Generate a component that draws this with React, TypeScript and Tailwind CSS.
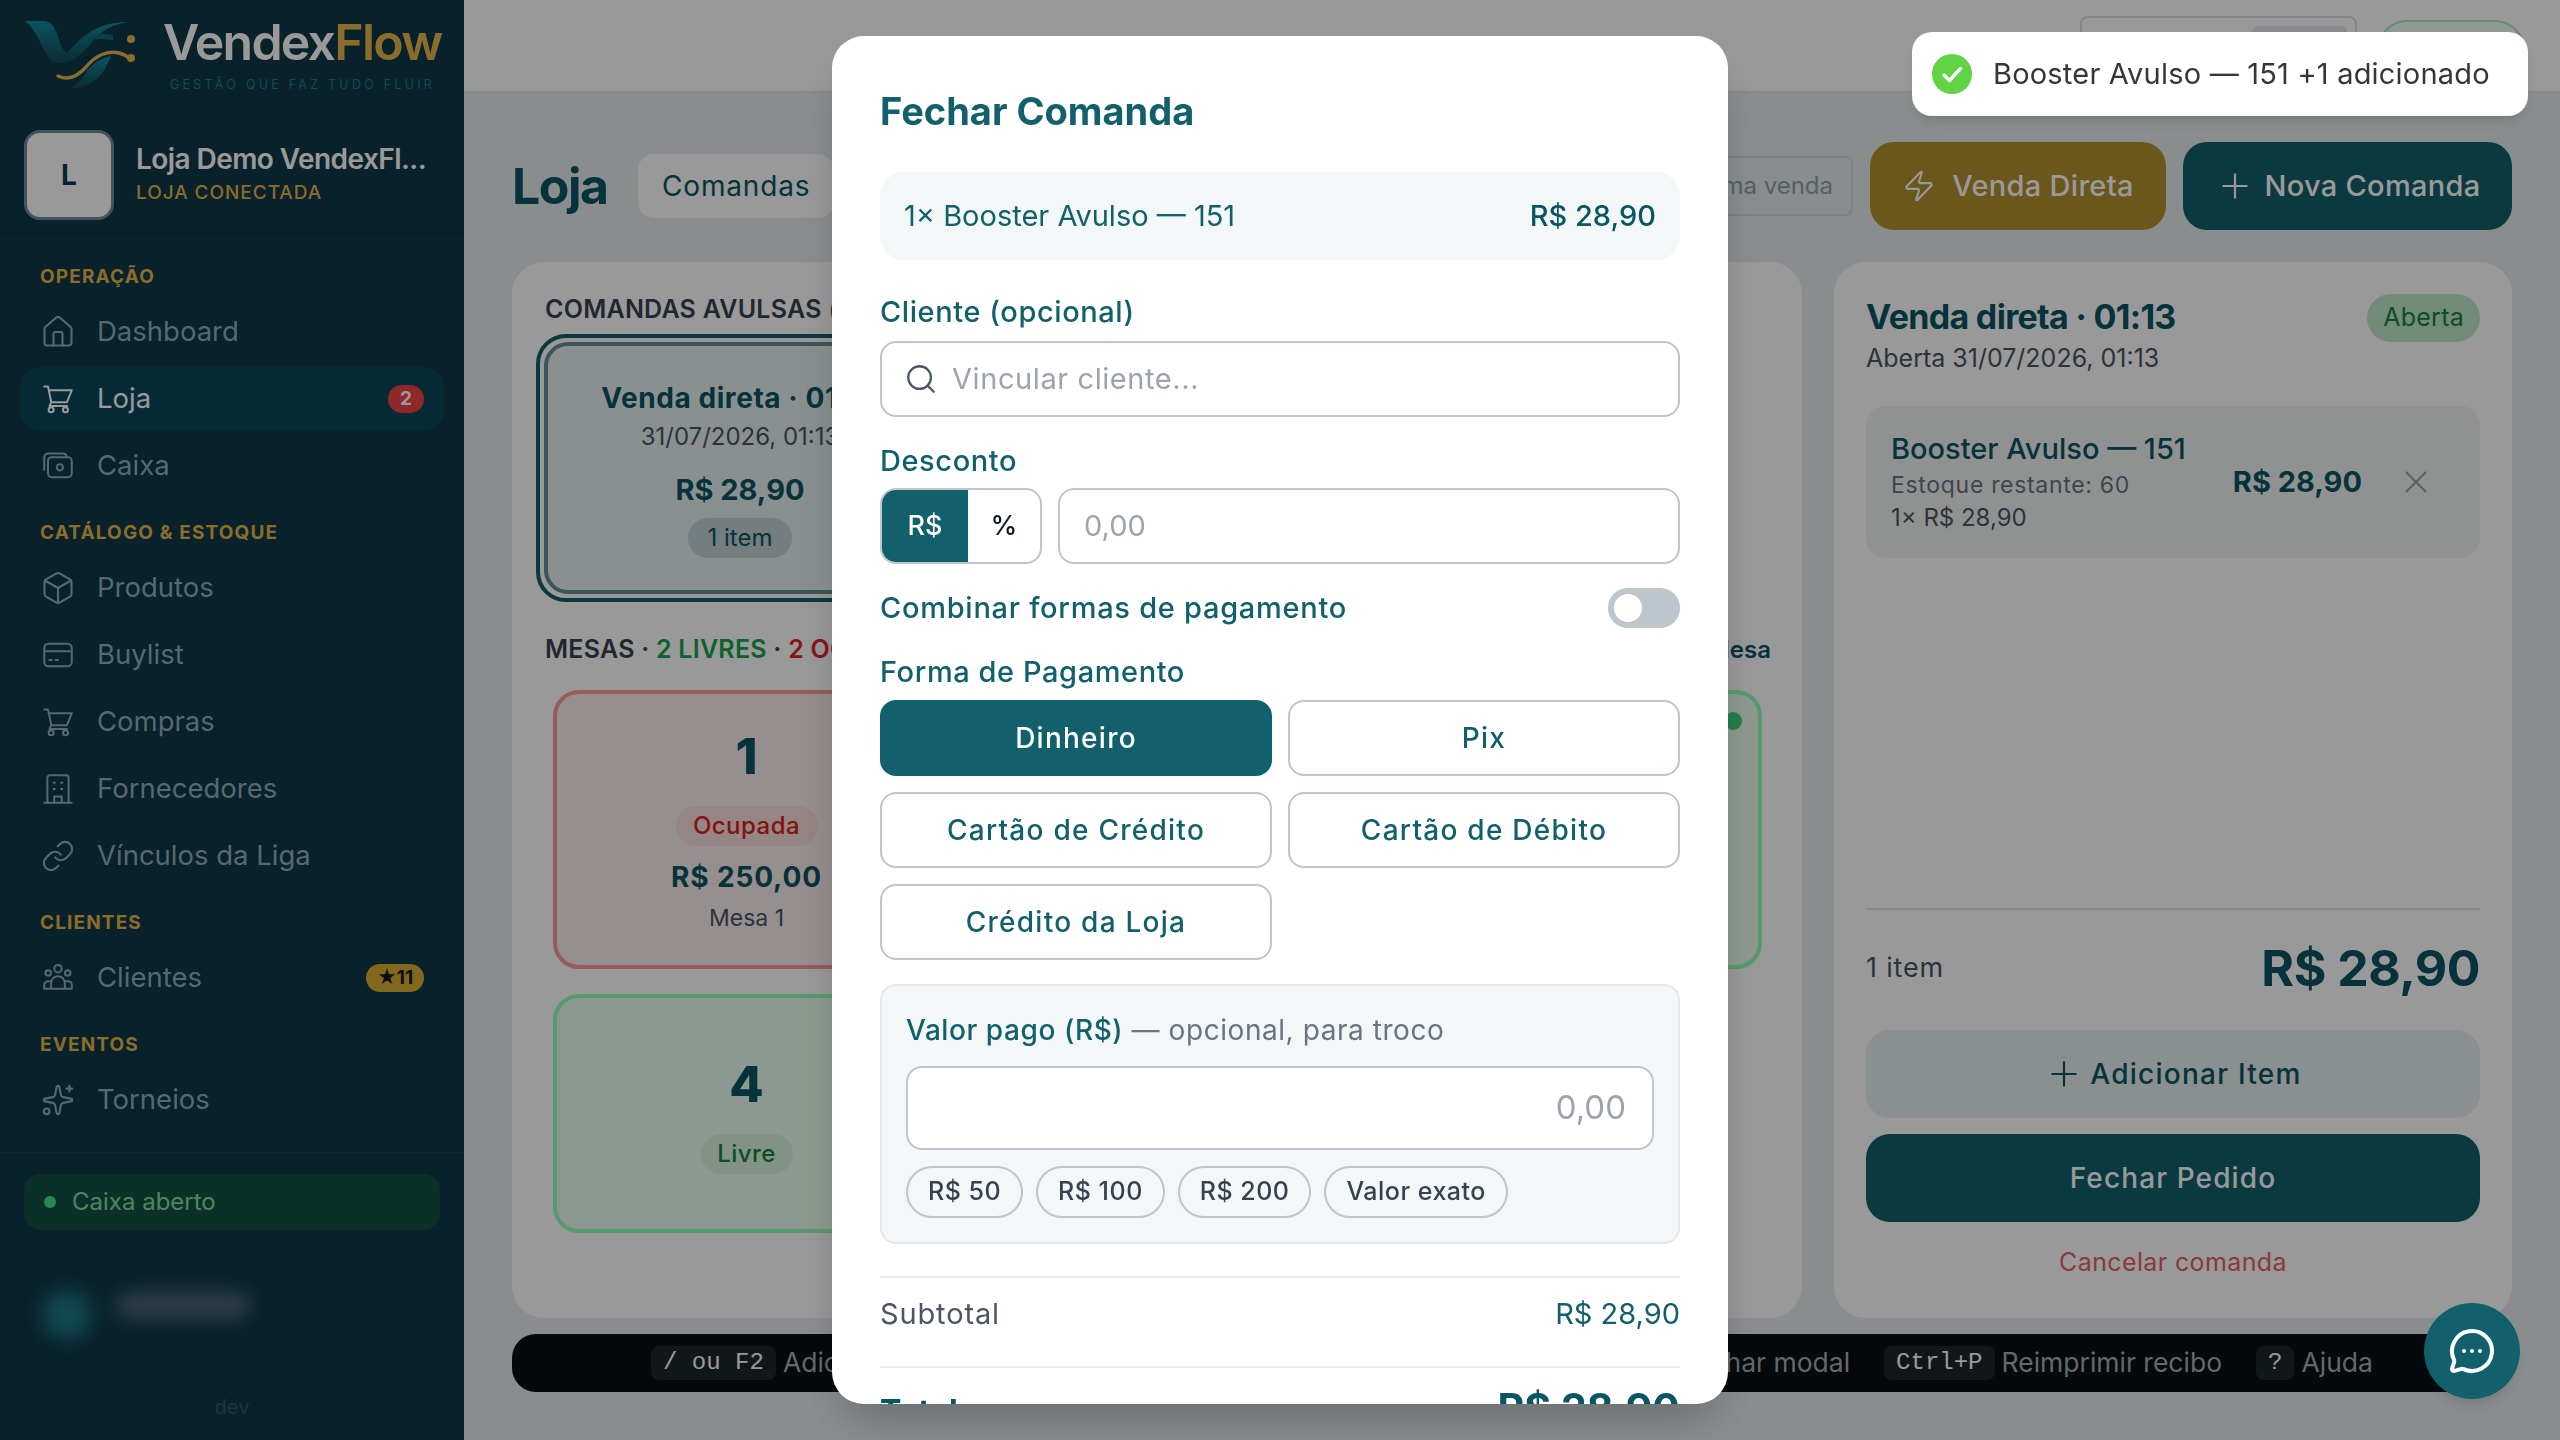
import { Plus, Search, X, Zap, House, Box, Sparkles, Link, MessageCircleMore } from 'lucide-react';
import type { ReactNode } from 'react';

const Cart = () => (
  <svg viewBox="0 0 24 24" className="w-[30px] h-[30px]" fill="none" stroke="currentColor" strokeWidth="1.6" strokeLinecap="round" strokeLinejoin="round">
    <path d="M1 2h3l2.6 12.5h12.6L23 5H5" />
    <path d="M6.6 14.5l-1.4 3h14" />
    <circle cx="6.5" cy="20.5" r="2" />
    <circle cx="18" cy="20.5" r="2" />
  </svg>
);

const CashIcon = () => (
  <svg viewBox="0 0 24 24" className="w-[30px] h-[30px]" fill="none" stroke="currentColor" strokeWidth="1.6" strokeLinecap="round" strokeLinejoin="round">
    <path d="M1 15V5a3 3 0 0 1 3-3h12a3 3 0 0 1 2.8 2" />
    <rect x="4" y="5" width="19" height="16" rx="3" />
    <circle cx="13.5" cy="13" r="2.5" />
  </svg>
);

const CardIcon = () => (
  <svg viewBox="0 0 24 24" className="w-[30px] h-[30px]" fill="none" stroke="currentColor" strokeWidth="1.6" strokeLinecap="round" strokeLinejoin="round">
    <rect x="1" y="3" width="22" height="18" rx="3.5" />
    <path d="M1 9h22M5 16h2M10 16h2" />
  </svg>
);

const BuildingIcon = () => (
  <svg viewBox="0 0 24 24" className="w-[30px] h-[30px]" fill="none" stroke="currentColor" strokeWidth="1.6" strokeLinecap="round" strokeLinejoin="round">
    <path d="M1 23h22M3.5 23V3a2 2 0 0 1 2-2h13a2 2 0 0 1 2 2v20" />
    <path d="M8.5 7h1M14.5 7h1M8.5 12h1M14.5 12h1M9 23v-5h6v5" />
  </svg>
);

const PeopleIcon = () => (
  <svg viewBox="0 0 24 24" className="w-[30px] h-[30px]" fill="none" stroke="currentColor" strokeWidth="1.6" strokeLinecap="round" strokeLinejoin="round">
    <circle cx="12" cy="4.5" r="3" />
    <circle cx="4.2" cy="8" r="2.2" />
    <circle cx="19.8" cy="8" r="2.2" />
    <path d="M6.5 20v-4a5.5 5.5 0 0 1 11 0v4" />
    <path d="M1 20.5v-3a3 3 0 0 1 3-3h2.5M23 20.5v-3a3 3 0 0 0-3-3h-2.5M1 20.5h22" />
  </svg>
);

const Logo = () => (
  <svg viewBox="0 0 116 72" className="w-[116px] h-[72px] shrink-0">
    <defs>
      <linearGradient id="lg1" x1="0" y1="0" x2="0" y2="1">
        <stop offset="0" stopColor="#128ea0" />
        <stop offset="1" stopColor="#114958" />
      </linearGradient>
    </defs>
    <path d="M0 1h18c8 0 11 5 14 13 3 9 5 16 10 19C54 20 68 2 103 2 84 5 72 14 62 28 50 41 38 46 28 42 18 34 14 12 0 1z" fill="url(#lg1)" />
    <path d="M88 15c-8-2-18-1-25 5 8-1 17-1 25 0z" fill="#126a7a" />
    <path d="M86 36c-10 2-20 8-26 18-6 10-14 15-20 14 14 2 30-4 38-16 3-5 6-11 8-16z" fill="url(#lg1)" />
    <path d="M33 56c10 5 20 0 28-9 9-11 21-17 33-14 4 1 8 3 11 6" fill="none" stroke="#e6b648" strokeWidth="3.4" strokeLinecap="round" />
    <circle cx="106" cy="38" r="4" fill="#e6b648" />
    <circle cx="106" cy="19" r="4" fill="#e6b648" />
  </svg>
);

const Section = ({ title }: { title: string }) => (
  <div className="mt-[24px] mb-[12px] pl-[20px] h-[22px] leading-[22px] text-[19px] font-bold tracking-[0.06em] text-[#e6b648]">{title}</div>
);

const NavItem = ({ icon, label, active, badge }: { icon: ReactNode; label: string; active?: boolean; badge?: ReactNode }) => (
  <div className={`flex items-center h-[64px] mb-[3px] pl-[23px] pr-[20px] rounded-[20px] gap-[24px] text-[27.5px] ${active ? 'bg-[#09475a] text-[#ffffff]' : 'text-[#8fb0b8]'}`}>
    <span className="w-[30px] h-[30px] flex items-center justify-center">{icon}</span>
    <span className="flex-1">{label}</span>
    {badge}
  </div>
);

const navIcon = 'shrink-0';

const Sidebar = () => (
  <aside className="w-[464px] h-screen shrink-0 bg-[#0e3746] flex flex-col">
    <div className="h-[110px] shrink-0 flex items-start pl-[25px] pt-[20px] border-b border-[#104150]">
      <Logo />
      <div className="ml-[22px] -mt-[3px]">
        <div className="text-[50px] leading-[50px] font-semibold tracking-[-0.035em] text-white">
          Vendex<span className="text-[#e6b648]">Flow</span>
        </div>
        <div className="mt-[10px] ml-[7px] text-[12.5px] leading-[16px] tracking-[0.26em] whitespace-nowrap text-[#17808f]">GESTÃO QUE FAZ TUDO FLUIR</div>
      </div>
    </div>
    <div className="h-[130px] shrink-0 flex items-center pl-[24px] gap-[22px] border-b border-[#104150]">
      <div className="w-[90px] h-[90px] rounded-[16px] bg-white border-[3px] border-[#6f8e9a] flex items-center justify-center text-[28px] font-bold text-[#0e3746]">L</div>
      <div className="min-w-0 -mt-[3px]">
        <div className="text-[28px] leading-[36px] font-semibold tracking-[-0.02em] text-white">Loja Demo VendexFl...</div>
        <div className="mt-[3px] text-[19px] leading-[26px] font-medium tracking-[0.05em] text-[#e6b648]">LOJA CONECTADA</div>
      </div>
    </div>
    <nav className="flex-1 px-[20px] mt-[2px]">
      <Section title="OPERAÇÃO" />
      <NavItem icon={<House size={36} strokeWidth={1.4} className={navIcon} />} label="Dashboard" />
      <NavItem
        icon={<Cart />}
        label="Loja"
        active
        badge={<span className="w-[36px] h-[28px] rounded-full bg-[#ef4444] flex items-center justify-center text-[19px] font-bold text-white">2</span>}
      />
      <NavItem icon={<CashIcon />} label="Caixa" />
      <Section title="CATÁLOGO & ESTOQUE" />
      <NavItem icon={<Box size={36} strokeWidth={1.4} className={navIcon} />} label="Produtos" />
      <NavItem icon={<CardIcon />} label="Buylist" />
      <NavItem icon={<Cart />} label="Compras" />
      <NavItem icon={<BuildingIcon />} label="Fornecedores" />
      <NavItem icon={<Link size={34} strokeWidth={1.5} className={navIcon} />} label="Vínculos da Liga" />
      <Section title="CLIENTES" />
      <NavItem
        icon={<PeopleIcon />}
        label="Clientes"
        badge={<span className="w-[58px] h-[28px] rounded-full bg-[#d9ae2f] flex items-center justify-center text-[19px] font-bold text-[#10181a]">★11</span>}
      />
      <Section title="EVENTOS" />
      <NavItem icon={<Sparkles size={34} strokeWidth={1.5} className={navIcon} />} label="Torneios" />
    </nav>
    <div className="h-[288px] shrink-0 border-t border-[#12475a] px-[24px] pt-[21px] flex flex-col">
      <div className="h-[56px] rounded-[16px] bg-[#125043] flex items-center pl-[20px] gap-[16px] text-[24px] text-[#7fe0a0]">
        <span className="w-[12px] h-[12px] rounded-full bg-[#4ade80]" />
        Caixa aberto
      </div>
      <div className="mt-[60px] flex items-center gap-[26px] pl-[18px] blur-[10px]">
        <div className="w-[50px] h-[50px] rounded-full bg-[#1f7a8a]" />
        <div className="w-[130px] h-[24px] -mt-[20px] rounded bg-[#56707a]" />
      </div>
      <div className="mt-[52px] text-center text-[20px] text-[#2b5a68]">dev</div>
    </div>
  </aside>
);

const TableCard = ({ n, status, price, free }: { n: string; status: string; price?: string; free?: boolean }) => (
  <div className={`flex flex-col items-center rounded-[26px] border-[4px] ${free ? 'h-[239px] pt-[56px] border-[#92ffbb] bg-[#ecfff0]' : 'h-[279px] pt-[32px] border-[#f99a9a] bg-[#fbeeee]'}`}>
    <div className="text-[50px] leading-[60px] font-extrabold text-[#0a5563]">{n}</div>
    <div className={`mt-[20px] h-[40px] rounded-full flex items-center justify-center text-[24px] font-medium tracking-[0.02em] ${free ? 'w-[92px] bg-[#d9f5e0] text-[#15803d]' : 'w-[142px] bg-[#f8dede] text-[#dc2020]'}`}>{status}</div>
    {price && <div className="mt-[11px] text-[28px] leading-[40px] font-bold tracking-[0.03em] text-[#0a5563]">{price}</div>}
    {price && <div className="mt-[5px] text-[23px] leading-[32px] text-[#4b5563]">Mesa {n}</div>}
  </div>
);

const Kbd = ({ children }: { children: ReactNode }) => (
  <span className="h-[34px] px-[12px] mr-[7px] rounded-[8px] bg-[#1d2529] flex items-center font-['Liberation_Mono',monospace] text-[24px] text-[#ffffff] whitespace-pre">{children}</span>
);

const Hint = ({ k, label }: { k: string; label: string }) => (
  <div className="flex items-center">
    <Kbd>{k}</Kbd>
    <span className="text-[26.5px] text-[#a8aeb0] whitespace-nowrap">{label}</span>
  </div>
);

const LeftPanel = () => (
  <section className="flex-1 min-w-0 h-[1056px] rounded-[32px] bg-white pl-[24px] pr-[40px]">
    <div className="ml-[9px] mt-[33px] h-[28px] leading-[28px] text-[25px] font-semibold tracking-[0.01em] text-[#374151]">COMANDAS AVULSAS <span className="font-normal">(1)</span></div>
    <div className="mt-[11px] w-[408px] h-[268px] rounded-[30px] border-[4px] border-[#11606c] p-[4px]">
      <div className="w-full h-full rounded-[24px] border-[4px] border-[#5f8f99] bg-[#e6f0f0] flex flex-col items-center pt-[33px]">
        <div className="text-[28px] leading-[38px] font-bold tracking-[0.02em] text-[#0a5563] whitespace-nowrap">Venda direta · 01:13</div>
        <div className="mt-[3px] text-[24px] leading-[34px] text-[#4b5563] whitespace-nowrap">31/07/2026, 01:13</div>
        <div className="mt-[17px] text-[29px] leading-[38px] font-bold text-[#0a5563]">R$ 28,90</div>
        <div className="mt-[9px] h-[40px] w-[104px] rounded-full bg-[#c2d1d4] flex items-center justify-center text-[24px] text-[#0a5563]">1 item</div>
      </div>
    </div>
    <div className="mt-[33px] pl-[9px] flex items-center justify-between h-[30px]">
      <div className="text-[25px] font-semibold tracking-[0.01em] text-[#374151]">
        MESAS · <span className="text-[#16a34a]">2 LIVRES</span> · <span className="text-[#dc2626]">2 OCUPADAS</span>
      </div>
      <div className="text-[24px] font-semibold text-[#0a5563] -mr-[9px]">+ Nova Mesa</div>
    </div>
    <div className="mt-[25px] ml-[17px] grid grid-cols-3 gap-x-[24px] gap-y-[25px] items-start">
      <TableCard n="1" status="Ocupada" price="R$ 250,00" />
      <TableCard n="2" status="Ocupada" price="R$ 120,00" />
      <div className="h-[279px] relative flex flex-col items-center pt-[32px] rounded-[26px] border-[4px] border-[#92ffbb] bg-[#ecfff0]">
        <span className="absolute top-[18px] right-[16px] w-[18px] h-[18px] rounded-full bg-[#3ed07a]" />
        <div className="text-[50px] leading-[60px] font-extrabold text-[#0a5563]">3</div>
      </div>
      <TableCard n="4" status="Livre" free />
    </div>
  </section>
);

const RightPanel = () => (
  <section className="w-[678px] shrink-0 h-[1056px] rounded-[32px] bg-white px-[32px] pt-[32px] flex flex-col">
    <div className="flex justify-between items-start">
      <div>
        <div className="text-[34px] leading-[46px] font-bold tracking-[-0.02em] text-[#0a5563]">Venda direta · 01:13</div>
        <div className="text-[25px] leading-[36px] text-[#4b5563]">Aberta 31/07/2026, 01:13</div>
      </div>
      <div className="h-[48px] px-[16px] rounded-full bg-[#bde8c8] flex items-center text-[25px] tracking-[0.01em] text-[#15803d]">Aberta</div>
    </div>
    <div className="mt-[30px] h-[152px] rounded-[20px] bg-[#f1f4f3] pl-[25px] flex items-center">
      <div className="flex-1">
        <div className="text-[29px] leading-[38px] font-medium text-[#0a5563]">Booster Avulso — 151</div>
        <div className="text-[23px] leading-[34px] tracking-[0.03em] text-[#6b7280]">Estoque restante: 60</div>
        <div className="text-[24px] leading-[32px] text-[#4b5563]">1× R$ 28,90</div>
      </div>
      <div className="text-[29px] font-bold text-[#0a5563]">R$ 28,90</div>
      <X size={38} strokeWidth={1.4} className="ml-[35px] mr-[45px] text-[#9ca3af]" />
    </div>
    <div className="flex-1" />
    <div className="h-[118px] border-t-[2px] border-[#e5e7eb] flex items-center justify-between pt-[1px]">
      <span className="text-[27px] tracking-[0.03em] text-[#4b5563]">1 item</span>
      <span className="text-[50px] font-bold tracking-[-0.01em] text-[#0a5563]">R$ 28,90</span>
    </div>
    <div className="mt-[4px] h-[88px] rounded-[24px] bg-[#e6eeee] flex items-center justify-center gap-[6px] text-[28px] font-medium tracking-[0.045em] text-[#0a5563]">
      <Plus size={40} strokeWidth={1.3} />
      Adicionar Item
    </div>
    <div className="mt-[16px] h-[88px] rounded-[24px] bg-[#11606c] flex items-center justify-center text-[28px] font-medium tracking-[0.04em] text-white">Fechar Pedido</div>
    <div className="mt-[22px] mb-[38px] text-center text-[25px] leading-[36px] tracking-[0.015em] text-[#e86060]">Cancelar comanda</div>
  </section>
);

const Main = () => (
  <main className="flex-1 min-w-0 h-screen bg-[#e6ecec] flex flex-col">
    <div className="h-[93px] shrink-0 bg-white border-b-[2px] border-[#e2e8ea] flex items-start justify-end pr-[35px] gap-[20px]">
      <div className="w-[277px] h-[60px] mt-[16px] rounded-[8px] border-[2px] border-[#d7dfe3] flex justify-end p-[8px]">
        <div className="w-[95px] h-[40px] rounded-[6px] bg-[#e5e7eb]" />
      </div>
      <div className="w-[148px] h-[60px] mt-[20px] rounded-full border-[2px] border-[#a7e8bd] bg-[#eefdf3]" />
    </div>
    <div className="flex items-center h-[88px] mt-[49px] ml-[48px] mr-[48px]">
      <h1 className="text-[50px] font-bold tracking-[-0.03em] text-[#0a5563] w-[126px]">Loja</h1>
      <div className="h-[64px] px-[24px] rounded-[16px] bg-white flex items-center text-[28px] tracking-[0.03em] text-[#0a5563]">Comandas</div>
      <div className="flex-1" />
      <div className="w-[300px] h-[60px] rounded-[8px] border-[2px] border-[#cfd9dd] flex items-center justify-end pr-[18px] text-[24px] text-[#8aa0a8] mr-[17px] whitespace-nowrap">Buscar uma venda</div>
      <div className="w-[296px] h-[88px] rounded-[24px] bg-[#b28f30] flex items-center justify-center gap-[16px] text-[29px] font-medium tracking-[0.01em] text-white mr-[17px]">
        <Zap size={34} strokeWidth={1.5} />
        Venda Direta
      </div>
      <div className="w-[329px] h-[88px] rounded-[24px] bg-[#11606c] flex items-center justify-center gap-[10px] text-[29px] font-medium tracking-[0.01em] text-white">
        <Plus size={40} strokeWidth={1.3} />
        Nova Comanda
      </div>
    </div>
    <div className="flex gap-[32px] mx-[48px] mt-[32px]">
      <LeftPanel />
      <RightPanel />
    </div>
    <div className="mx-[48px] mt-[16px] h-[58px] rounded-[24px] bg-[#0a1014] flex items-center justify-center gap-[34px]">
      <Hint k="/ ou F2" label="Adicionar item" />
      <Hint k="F3" label="Buscar no catálogo" />
      <Hint k="F4" label="Fechar pedido" />
      <Hint k="Esc" label="Fechar modal" />
      <Hint k="Ctrl+P" label="Reimprimir recibo" />
      <Hint k="?" label="Ajuda" />
    </div>
  </main>
);

const PayButton = ({ label, active }: { label: string; active?: boolean }) => (
  <div className={`h-[76px] rounded-[16px] flex items-center justify-center text-[28px] font-medium tracking-[0.045em] ${active ? 'bg-[#11606c] text-white' : 'border-[2px] border-[#bcc6cc] text-[#11606c]'}`}>{label}</div>
);

const Chip = ({ label }: { label: string }) => (
  <div className="h-[52px] px-[20px] rounded-full border-[2px] border-[#bcc6cc] flex items-center text-[25px] font-medium tracking-[0.02em] text-[#374151]">{label}</div>
);

const Modal = () => (
  <div className="fixed inset-0 flex items-center justify-center">
    <div className="w-[896px] h-[1368px] rounded-[32px] bg-white overflow-hidden px-[48px] shadow-2xl">
      <h2 className="mt-[56px] h-[38px] leading-[38px] text-[38px] font-bold text-[#11606c]">Fechar Comanda</h2>
      <div className="mt-[42px] h-[88px] rounded-[24px] bg-[#f3f7f8] px-[24px] flex items-center justify-between text-[29px]">
        <span className="text-[#11606c]">1× Booster Avulso — 151</span>
        <span className="font-medium text-[#0a5563]">R$ 28,90</span>
      </div>
      <div className="mt-[35px] h-[34px] leading-[34px] text-[29px] font-medium tracking-[0.02em] text-[#11606c]">Cliente (opcional)</div>
      <div className="mt-[12px] h-[76px] rounded-[16px] border-[2px] border-[#bcc6cc] flex items-center pl-[22px] gap-[14px] text-[29px] tracking-[0.02em] text-[#9ca3af]">
        <Search size={34} strokeWidth={1.6} className="text-[#4b5563]" />
        Vincular cliente...
      </div>
      <div className="mt-[27px] h-[34px] leading-[34px] text-[29px] font-medium tracking-[0.02em] text-[#11606c]">Desconto</div>
      <div className="mt-[10px] flex gap-[16px]">
        <div className="w-[162px] h-[76px] rounded-[16px] border-[2px] border-[#bcc6cc] overflow-hidden flex text-[27px] font-medium">
          <div className="w-[86px] bg-[#11606c] text-white flex items-center justify-center">R$</div>
          <div className="flex-1 text-[#111827] flex items-center justify-center">%</div>
        </div>
        <div className="flex-1 h-[76px] rounded-[16px] border-[2px] border-[#bcc6cc] flex items-center pl-[24px] text-[29px] text-[#9ca3af]">0,00</div>
      </div>
      <div className="mt-[24px] h-[40px] flex items-center justify-between">
        <span className="text-[29px] font-medium tracking-[0.025em] text-[#11606c]">Combinar formas de pagamento</span>
        <span className="w-[72px] h-[40px] rounded-full bg-[#bcc6cc] p-[6px]">
          <span className="block w-[28px] h-[28px] rounded-full bg-white" />
        </span>
      </div>
      <div className="mt-[27px] h-[34px] leading-[34px] text-[29px] font-medium tracking-[0.02em] text-[#11606c]">Forma de Pagamento</div>
      <div className="mt-[11px] grid grid-cols-2 gap-x-[16px] gap-y-[16px]">
        <PayButton label="Dinheiro" active />
        <PayButton label="Pix" />
        <PayButton label="Cartão de Crédito" />
        <PayButton label="Cartão de Débito" />
        <PayButton label="Crédito da Loja" />
      </div>
      <div className="mt-[24px] h-[260px] rounded-[16px] border-[2px] border-[#e3e8eb] bg-[#f3f7f8] px-[24px] pt-[26px]">
        <div className="h-[36px] leading-[36px] text-[28px] tracking-[0.02em] text-[#6b7280]">
          <span className="font-medium text-[#11606c]">Valor pago (R$)</span> — opcional, para troco
        </div>
        <div className="mt-[18px] h-[84px] rounded-[16px] border-[2px] border-[#bcc6cc] bg-white flex items-center justify-end pr-[26px] text-[33px] text-[#9ca3af]">0,00</div>
        <div className="mt-[16px] flex gap-[13px]">
          <Chip label="R$ 50" />
          <Chip label="R$ 100" />
          <Chip label="R$ 200" />
          <Chip label="Valor exato" />
        </div>
      </div>
      <div className="mt-[32px] h-[90px] border-t-[2px] border-[#e8ecee] flex items-center justify-between pb-[16px] text-[29px]">
        <span className="tracking-[0.03em] text-[#4b5563]">Subtotal</span>
        <span className="text-[#11606c]">R$ 28,90</span>
      </div>
      <div className="border-t-[2px] border-[#e8ecee] pt-[10px] flex items-baseline justify-between">
        <span className="text-[32px] font-bold text-[#0a5563]">Total</span>
        <span className="text-[41px] font-bold text-[#0a5563]">R$ 28,90</span>
      </div>
    </div>
  </div>
);

const Toast = () => (
  <div className="fixed top-[32px] right-[32px] w-[616px] h-[84px] rounded-[20px] bg-white shadow-lg flex items-center pl-[20px] gap-[21px]">
    <svg viewBox="0 0 40 40" className="w-[40px] h-[40px]">
      <circle cx="20" cy="20" r="20" fill="#61d345" />
      <path d="M12 21l5.5 5.5L28.5 14.5" fill="none" stroke="#fff" strokeWidth="3.4" strokeLinecap="round" strokeLinejoin="round" />
    </svg>
    <span className="text-[29px] tracking-[0.007em] text-[#363636] whitespace-nowrap">Booster Avulso — 151 +1 adicionado</span>
  </div>
);

export default function App() {
  return (
    <div className="relative h-screen overflow-hidden flex font-['Inter',sans-serif]">
      <Sidebar />
      <Main />
      <div className="fixed inset-0 bg-black/40" />
      <Modal />
      <Toast />
      <button className="fixed left-[2424px] top-[1303px] w-[96px] h-[96px] rounded-full bg-[#11606c] flex items-center justify-center text-white shadow-lg">
        <MessageCircleMore size={48} strokeWidth={2} />
      </button>
    </div>
  );
}
